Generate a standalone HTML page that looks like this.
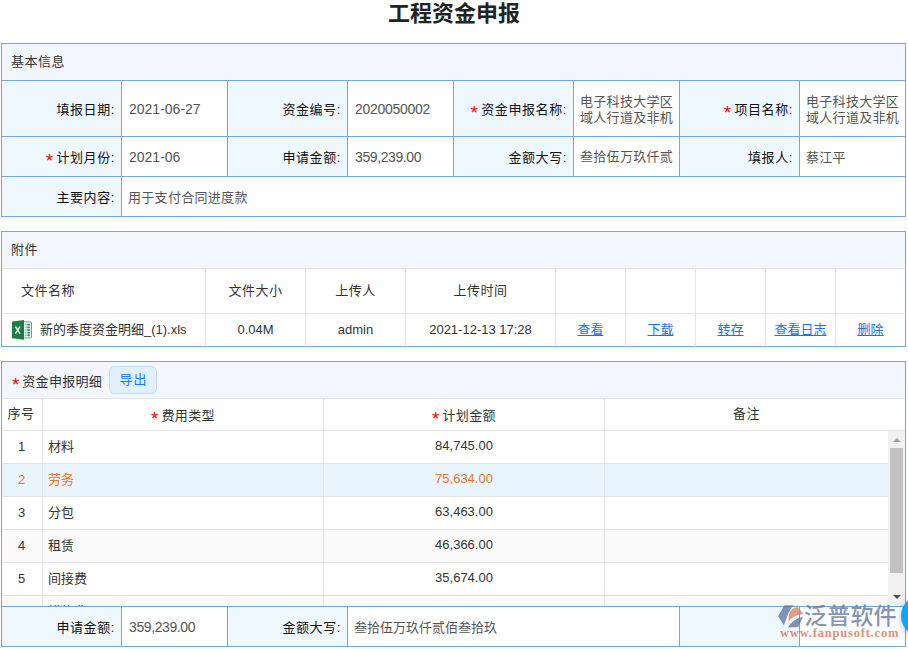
<!DOCTYPE html>
<html lang="zh-CN">
<head>
<meta charset="utf-8">
<title>工程资金申报</title>
<style>
*{box-sizing:border-box;}
html,body{margin:0;padding:0;}
html{overflow:hidden;background:#fff;}
body{width:908px;height:649px;overflow:hidden;background:#fff;position:relative;
  font-family:"Liberation Sans","Noto Sans CJK SC",sans-serif;font-size:13px;color:#333;}
h1{position:absolute;left:0;top:1px;width:908px;margin:0;text-align:center;font-size:22px;line-height:26px;font-weight:bold;color:#222;}
table{border-collapse:separate;border-spacing:0;table-layout:fixed;position:absolute;left:1px;width:905px;
  border-left:1px solid #71a9dc;border-top:1px solid #71a9dc;}
td,th{padding:0;font-weight:normal;overflow:hidden;white-space:nowrap;}
.req{color:#f00;font-size:19px;line-height:0;position:relative;top:5px;margin-right:-1px;letter-spacing:0;}

/* ---------- panel 1 ---------- */
#p1{top:43px;}
#p1 td{border-right:1px solid #71a9dc;border-bottom:1px solid #71a9dc;}
#p1 .hd{height:37px;background:#f2f7ff;text-align:left;padding-left:9px;padding-bottom:4px;color:#333;letter-spacing:.5px;}
#p1 .lb{background:#f0f8ff;text-align:right;padding-right:6px;color:#111;letter-spacing:.6px;}
#p1 .vl{background:#fff;text-align:left;padding-left:7px;padding-right:6px;color:#555;font-size:14px;letter-spacing:-.28px;}
#p1 .vl.ml,#p1 .vl.cj{font-size:13px;letter-spacing:.3px;padding-left:6px;}
#p1 .vl.dt{letter-spacing:0;}
#p1 .vl.amt{letter-spacing:-.4px;}
#p1 .vl.ml div{white-space:normal;line-height:16px;height:32px;overflow:hidden;width:94px;margin-top:2px;}
#p1 .vl.cj div{white-space:normal;line-height:18px;height:18px;overflow:hidden;width:94px;}
#p1 tr.r1 td{height:56px;}
#p1 tr.r2 td{height:40px;}

/* ---------- panel 2 ---------- */
#p2{top:231px;}
#p2 td,#p2 th{border-right:1px solid #e4e4e4;border-bottom:1px solid #e4e4e4;background:#fff;text-align:center;}
#p2 td.hd{height:37px;background:#f2f7ff;text-align:left;padding-left:9px;padding-bottom:4px;border-right-color:#71a9dc;border-bottom-color:#e4e4e4;letter-spacing:.5px;}
#p2 th{height:45px;color:#333;padding-bottom:3px;letter-spacing:.5px;}
#p2 td{height:33px;border-bottom-color:#71a9dc;color:#333;padding-bottom:2px;}
#p2 td.lk{padding-bottom:3px;}
#p2 .last{border-right-color:#71a9dc;}
#p2 th.fn{text-align:left;padding-left:19px;}
#p2 td.fn{text-align:left;padding-left:10px;padding-bottom:0;}
#p2 td.fn svg{vertical-align:middle;margin-right:8px;position:relative;top:-1px;}
#p2 a{color:#1a73e8;text-decoration:underline;}

/* ---------- panel 3 ---------- */
#p3{position:absolute;left:1px;top:361px;width:905px;height:286px;border:1px solid #71a9dc;border-bottom:none;background:#fff;}
#p3 .hd{position:absolute;left:0;top:0;width:903px;height:37px;background:#f2f7ff;border-bottom:1px solid #e4e4e4;line-height:36px;padding-left:10px;}
#p3 .hd .ttl{position:absolute;left:10px;top:2px;letter-spacing:.3px;}
#p3 .btn{position:absolute;left:107px;top:4px;width:48px;height:28px;border:1px solid #c4dcf3;border-radius:5px;background:#e2effc;color:#1180f0;line-height:26px;text-align:center;letter-spacing:1px;text-indent:1px;}
#p3 table{position:absolute;left:0;border:none;}
#p3 td,#p3 th{border-right:1px solid #e4e4e4;border-bottom:1px solid #e4e4e4;text-align:center;}
#t3h{top:37px;width:903px;}
#t3h th{height:32px;background:#fff;color:#333;letter-spacing:.4px;}
#t3h th.pl{padding-bottom:5px;}
#t3h th.nb{border-right:none;}
#body3{position:absolute;left:0;top:69px;width:903px;height:175px;overflow:hidden;}
#t3b{top:0;width:886px;}
#t3b td{height:33px;color:#333;padding-bottom:3px;}
#t3b td.nm{text-align:left;padding-left:5px;padding-bottom:4px;}
#t3b td.no{padding-bottom:2px;padding-right:1px;}
#t3b td:last-child{border-right:none;}
#t3b tr.alt td{background:#fafafa;}
#t3b tr.sel td{background:#e8f4fe;color:#e5782a;}
#sb{position:absolute;left:886px;top:0;width:17px;height:175px;background:#f1f1f1;}
#sb .th{position:absolute;left:2px;top:17px;width:13px;height:125px;background:#c1c1c1;}
#sb .up{position:absolute;left:5px;top:7px;width:0;height:0;border-left:4px solid transparent;border-right:4px solid transparent;border-bottom:4px solid #a3a3a3;}
#sb .dn{position:absolute;left:5px;top:164px;width:0;height:0;border-left:4px solid transparent;border-right:4px solid transparent;border-top:4px solid #505050;}

/* ---------- summary ---------- */
#p4{top:606px;}
#p4 td{height:40px;border-right:1px solid #71a9dc;border-bottom:1px solid #71a9dc;}
#p4 .lb{background:#f0f8ff;text-align:right;padding-right:6px;color:#111;letter-spacing:.6px;}
#p4 .vl{background:#fff;text-align:left;padding-left:6px;color:#555;}
#p4 .vl.num{font-size:14px;letter-spacing:-.4px;padding-left:7px;}

/* ---------- floating ---------- */
#fab{position:absolute;left:901px;top:596px;width:40px;height:40px;border-radius:50%;background:#0aa6f7;box-shadow:0 2px 8px rgba(0,0,0,.25);}
#wm{position:absolute;left:776px;top:603px;width:126px;height:40px;opacity:.75;}
#wm .cn{position:absolute;left:28px;top:-1px;font-size:23px;line-height:28px;font-weight:500;color:#5f7199;letter-spacing:.2px;white-space:nowrap;}
#wm .en{position:absolute;left:4px;top:22px;font-family:"Liberation Serif",serif;font-weight:bold;font-size:12.5px;line-height:16px;color:#cf6e4c;letter-spacing:.8px;white-space:nowrap;}
#wm svg{position:absolute;left:0;top:0;}
</style>
</head>
<body>
<h1>工程资金申报</h1>

<table id="p1">
<colgroup><col style="width:120px"><col style="width:106px"><col style="width:120px"><col style="width:106px"><col style="width:120px"><col style="width:106px"><col style="width:120px"><col style="width:106px"></colgroup>
<tr><td class="hd" colspan="8">基本信息</td></tr>
<tr class="r1">
  <td class="lb">填报日期:</td><td class="vl dt">2021-06-27</td>
  <td class="lb">资金编号:</td><td class="vl">2020050002</td>
  <td class="lb"><span class="req">*</span> 资金申报名称:</td><td class="vl ml"><div>电子科技大学区域人行道及非机动车道改造工程</div></td>
  <td class="lb"><span class="req">*</span> 项目名称:</td><td class="vl ml"><div>电子科技大学区域人行道及非机动车道改造工程</div></td>
</tr>
<tr class="r2">
  <td class="lb"><span class="req">*</span> 计划月份:</td><td class="vl dt">2021-06</td>
  <td class="lb">申请金额:</td><td class="vl amt">359,239.00</td>
  <td class="lb">金额大写:</td><td class="vl cj"><div>叁拾伍万玖仟贰佰叁拾玖</div></td>
  <td class="lb">填报人:</td><td class="vl cj">蔡江平</td>
</tr>
<tr class="r2">
  <td class="lb">主要内容:</td><td class="vl cj" colspan="7">用于支付合同进度款</td>
</tr>
</table>

<table id="p2">
<colgroup><col style="width:204px"><col style="width:100px"><col style="width:100px"><col style="width:150px"><col style="width:70px"><col style="width:70px"><col style="width:70px"><col style="width:70px"><col style="width:70px"></colgroup>
<tr><td class="hd" colspan="9">附件</td></tr>
<tr><th class="fn">文件名称</th><th>文件大小</th><th>上传人</th><th>上传时间</th><th></th><th></th><th></th><th></th><th class="last"></th></tr>
<tr>
  <td class="fn"><svg width="20" height="20" viewBox="0 0 20 20"><rect x="10.5" y="1.9" width="9" height="16" rx=".6" fill="#fff" stroke="#5aa680" stroke-width="1"/><rect x="12.6" y="3.8" width="2.1" height="1.8" fill="#9ccbb1"/><rect x="15.3" y="3.8" width="2.6" height="1.8" fill="#2f8c5a"/><rect x="12.6" y="6.5" width="2.1" height="1.8" fill="#9ccbb1"/><rect x="15.3" y="6.5" width="2.6" height="1.8" fill="#2f8c5a"/><rect x="12.6" y="9.1" width="2.1" height="1.8" fill="#9ccbb1"/><rect x="15.3" y="9.1" width="2.6" height="1.8" fill="#2f8c5a"/><rect x="12.6" y="11.8" width="2.1" height="1.8" fill="#9ccbb1"/><rect x="15.3" y="11.8" width="2.6" height="1.8" fill="#2f8c5a"/><rect x="12.6" y="14.4" width="2.1" height="1.8" fill="#9ccbb1"/><rect x="15.3" y="14.4" width="2.6" height="1.8" fill="#2f8c5a"/><path d="M0 1.5 L12 0 V19.7 L0 18.2Z" fill="#1e7a46"/><path d="M3.4 6.5 L8.1 13.6 M8.1 6.5 L3.4 13.6" stroke="#fff" stroke-opacity=".88" stroke-width="1.45" fill="none"/></svg>新的季度资金明细_(1).xls</td>
  <td>0.04M</td><td>admin</td><td>2021-12-13 17:28</td>
  <td class="lk"><a>查看</a></td><td class="lk"><a>下载</a></td><td class="lk"><a>转存</a></td><td class="lk"><a>查看日志</a></td><td class="lk last"><a>删除</a></td>
</tr>
</table>

<div id="p3">
  <div class="hd"><span class="ttl"><span class="req">*</span> 资金申报明细</span><span class="btn">导出</span></div>
  <table id="t3h">
  <colgroup><col style="width:41px"><col style="width:281px"><col style="width:281px"><col style="width:283px"><col style="width:17px"></colgroup>
  <tr><th class="pl" style="padding-right:2px">序号</th><th><span class="req">*</span> 费用类型</th><th><span class="req">*</span> 计划金额</th><th class="nb pl">备注</th><th class="nb"></th></tr>
  </table>
  <div id="body3">
    <table id="t3b">
    <colgroup><col style="width:41px"><col style="width:281px"><col style="width:281px"><col style="width:283px"></colgroup>
    <tr><td class="no">1</td><td class="nm">材料</td><td>84,745.00</td><td></td></tr>
    <tr class="sel"><td class="no">2</td><td class="nm">劳务</td><td>75,634.00</td><td></td></tr>
    <tr><td class="no">3</td><td class="nm">分包</td><td>63,463.00</td><td></td></tr>
    <tr class="alt"><td class="no">4</td><td class="nm">租赁</td><td>46,366.00</td><td></td></tr>
    <tr><td class="no">5</td><td class="nm">间接费</td><td>35,674.00</td><td></td></tr>
    <tr class="alt"><td class="no">6</td><td class="nm">措施费</td><td>53,357.00</td><td></td></tr>
    </table>
    <div id="sb"><i class="up"></i><i class="th"></i><i class="dn"></i></div>
  </div>
</div>

<table id="p4">
<colgroup><col style="width:120px"><col style="width:106px"><col style="width:120px"><col style="width:332px"><col style="width:120px"><col style="width:106px"></colgroup>
<tr>
  <td class="lb">申请金额:</td><td class="vl num">359,239.00</td>
  <td class="lb">金额大写:</td><td class="vl">叁拾伍万玖仟贰佰叁拾玖</td>
  <td class="lb"></td><td class="vl"></td>
</tr>
</table>

<div id="wm">
  <svg width="30" height="27" viewBox="0 0 30 27"><path d="M8.3 2.2 L17.9 2.2 C13 6.5 11 14 7.8 22.6 L2.2 13.3 Z" fill="#5f7199"/><path d="M12.8 18.4 C12 10.5 15 4.8 21.1 3.9 C24 6 26 8.5 27.1 11.3 C21 11.6 16 14 12.8 18.4 Z" fill="#d8805c"/><path d="M12 24.4 C15 19 20 15.2 27.1 14 L22.1 24.1 Z" fill="#5f7199"/></svg>
  <span class="cn">泛普软件</span>
  <span class="en">www.fanpusoft.com</span>
</div>
<div id="fab"></div>
</body>
</html>
